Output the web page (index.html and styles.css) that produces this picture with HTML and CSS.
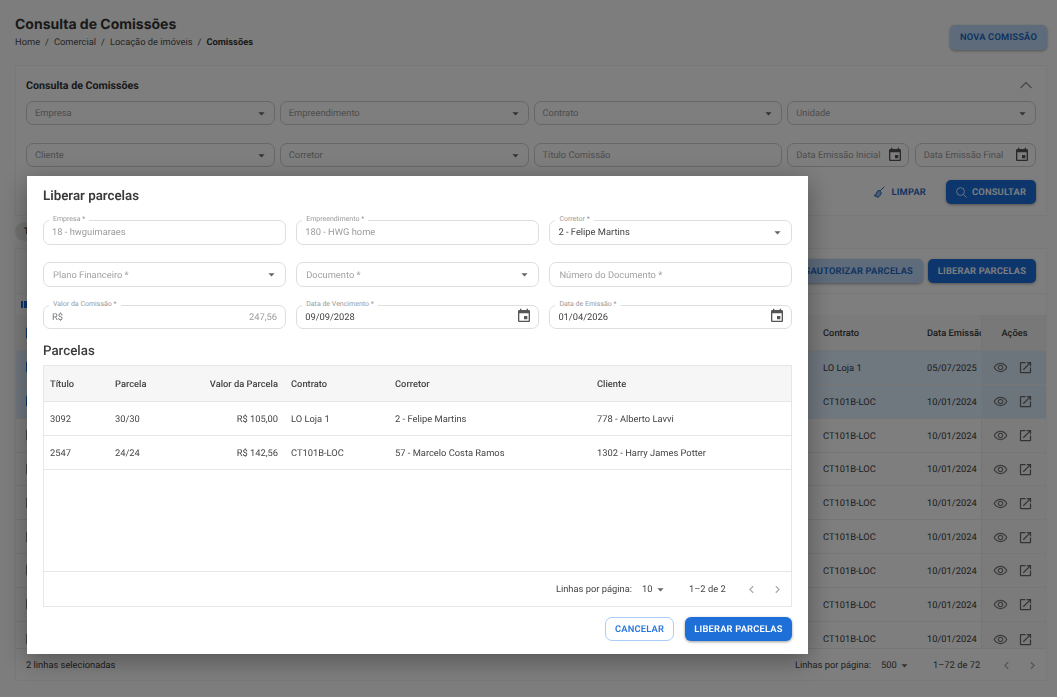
FILE: index.html
```html
<!DOCTYPE html>
<html lang="pt-BR">
<head>
<meta charset="utf-8">
<title>Consulta de Comissões</title>
<link rel="stylesheet" href="styles.css">
</head>
<body>
<svg class="defs" width="0" height="0" aria-hidden="true">
  <symbol id="i-drop" viewBox="0 0 24 24"><path d="M7 10l5 5 5-5z"/></symbol>
  <symbol id="i-cal" viewBox="0 0 24 24"><path d="M17 12h-5v5h5v-5zM16 1v2H8V1H6v2H5c-1.11 0-1.99.9-1.99 2L3 19c0 1.1.89 2 2 2h14c1.1 0 2-.9 2-2V5c0-1.1-.9-2-2-2h-1V1h-2zm3 18H5V8h14v11z"/></symbol>
  <symbol id="i-eye" viewBox="0 0 24 24"><path d="M12 6.500c3.790 0 7.170 2.130 8.820 5.500-1.650 3.370-5.020 5.500-8.820 5.500S4.830 15.370 3.180 12C4.830 8.630 8.210 6.500 12 6.500m0-2C7 4.500 2.730 7.610 1 12c1.730 4.390 6 7.500 11 7.500s9.270-3.110 11-7.500c-1.730-4.390-6-7.500-11-7.500zm0 5c1.380 0 2.500 1.120 2.500 2.500s-1.120 2.500-2.500 2.500-2.500-1.120-2.500-2.500 1.120-2.500 2.500-2.500m0-2c-2.480 0-4.500 2.020-4.500 4.500s2.020 4.500 4.500 4.500 4.500-2.020 4.500-4.500-2.020-4.500-4.500-4.500z"/></symbol>
  <symbol id="i-open" viewBox="0 0 24 24"><path d="M19 19H5V5h7V3H5c-1.110 0-2 .9-2 2v14c0 1.100.89 2 2 2h14c1.100 0 2-.9 2-2v-7h-2v7zM14 3v2h3.590l-9.830 9.830 1.410 1.410L19 6.410V10h2V3h-7z"/></symbol>
  <symbol id="i-left" viewBox="0 0 24 24"><path d="M15.410 7.410 14 6l-6 6 6 6 1.410-1.410L10.830 12z"/></symbol>
  <symbol id="i-right" viewBox="0 0 24 24"><path d="M10 6 8.590 7.410 13.170 12l-4.580 4.590L10 18l6-6z"/></symbol>
</svg>

<div class="page">
  <header class="head">
    <div>
      <h1 class="page-title">Consulta de Comissões</h1>
      <nav class="crumbs"><span>Home</span><i>/</i><span>Comercial</span><i>/</i><span>Locação de imóveis</span><i>/</i><b>Comissões</b></nav>
    </div>
    <button class="btn btn-light btn-new">NOVA COMISSÃO</button>
  </header>

  <section class="card filters">
    <div class="filters-top">
      <h2 class="card-title">Consulta de Comissões</h2>
      <svg class="collapse" viewBox="0 0 14 8"><path d="M1.500 7 7 1.500 12.500 7"/></svg>
    </div>
    <div class="filter-grid">
      <div class="bfield"><span>Empresa</span><svg class="ic-drop"><use href="#i-drop"/></svg></div>
      <div class="bfield"><span>Empreendimento</span><svg class="ic-drop"><use href="#i-drop"/></svg></div>
      <div class="bfield"><span>Contrato</span><svg class="ic-drop"><use href="#i-drop"/></svg></div>
      <div class="bfield"><span>Unidade</span><svg class="ic-drop"><use href="#i-drop"/></svg></div>
      <div class="bfield"><span>Cliente</span><svg class="ic-drop"><use href="#i-drop"/></svg></div>
      <div class="bfield"><span>Corretor</span><svg class="ic-drop"><use href="#i-drop"/></svg></div>
      <div class="bfield"><span>Título Comissão</span></div>
      <div class="date-pair">
        <div class="bfield"><span>Data Emissão Inicial</span><svg class="ic-cal"><use href="#i-cal"/></svg></div>
        <div class="bfield"><span>Data Emissão Final</span><svg class="ic-cal"><use href="#i-cal"/></svg></div>
      </div>
    </div>
    <div class="filter-actions">
      <button class="btn btn-text">
        <svg class="ic-broom" viewBox="0 0 16 16"><path d="M15 1 9.500 6.500"/><path class="broom-head" d="M8 5.500 11 8.800C10.500 11.300 9 13.500 7 15 5 14.700 3 13.700 1.500 12.500 3.500 12 5 10 5.200 7.800Z"/></svg>
        LIMPAR
      </button>
      <button class="btn btn-dark btn-search">
        <svg class="ic-search" viewBox="0 0 16 16"><circle cx="6.800" cy="6.800" r="4.800"/><path d="m10.300 10.300 4 4"/></svg>
        CONSULTAR
      </button>
    </div>
  </section>

  <div class="tabs"><span class="chip">T</span></div>

  <section class="card results">
    <div class="toolbar">
      <button class="btn btn-light">DESAUTORIZAR PARCELAS</button>
      <button class="btn btn-dark btn-release">LIBERAR PARCELAS</button>
    </div>
    <div class="tools"><span class="tool-bars"></span></div>
    <div class="rtable">
      <div class="rrow rhead"><span class="check check-on"></span><span>Contrato</span><span>Data Emissão</span><span class="ract">Ações</span></div>
      <div class="rrow sel"><span class="check check-on"></span><span>LO Loja 1</span><span>05/07/2025</span><span class="ract"><svg><use href="#i-eye"/></svg><svg><use href="#i-open"/></svg></span></div>
      <div class="rrow sel"><span class="check check-on"></span><span>CT101B-LOC</span><span>10/01/2024</span><span class="ract"><svg><use href="#i-eye"/></svg><svg><use href="#i-open"/></svg></span></div>
      <div class="rrow"><span class="check"></span><span>CT101B-LOC</span><span>10/01/2024</span><span class="ract"><svg><use href="#i-eye"/></svg><svg><use href="#i-open"/></svg></span></div>
      <div class="rrow"><span class="check"></span><span>CT101B-LOC</span><span>10/01/2024</span><span class="ract"><svg><use href="#i-eye"/></svg><svg><use href="#i-open"/></svg></span></div>
      <div class="rrow"><span class="check"></span><span>CT101B-LOC</span><span>10/01/2024</span><span class="ract"><svg><use href="#i-eye"/></svg><svg><use href="#i-open"/></svg></span></div>
      <div class="rrow"><span class="check"></span><span>CT101B-LOC</span><span>10/01/2024</span><span class="ract"><svg><use href="#i-eye"/></svg><svg><use href="#i-open"/></svg></span></div>
      <div class="rrow"><span class="check"></span><span>CT101B-LOC</span><span>10/01/2024</span><span class="ract"><svg><use href="#i-eye"/></svg><svg><use href="#i-open"/></svg></span></div>
      <div class="rrow"><span class="check"></span><span>CT101B-LOC</span><span>10/01/2024</span><span class="ract"><svg><use href="#i-eye"/></svg><svg><use href="#i-open"/></svg></span></div>
      <div class="rrow rlast"><span class="check"></span><span>CT101B-LOC</span><span>10/01/2024</span><span class="ract"><svg><use href="#i-eye"/></svg><svg><use href="#i-open"/></svg></span></div>
    </div>
    <footer class="rfoot">
      <span>2 linhas selecionadas</span>
      <div class="pager pager-page">
        <span>Linhas por página:</span>
        <span class="pager-size">500<svg class="ic-drop"><use href="#i-drop"/></svg></span>
        <span class="pager-range">1–72 de 72</span>
        <span class="pager-nav"><svg><use href="#i-left"/></svg><svg><use href="#i-right"/></svg></span>
      </div>
    </footer>
  </section>
</div>

<div class="overlay"></div>

<div class="modal" role="dialog">
  <h2 class="modal-title">Liberar parcelas</h2>
  <div class="form-grid">
    <div class="field"><label>Empresa *</label><span class="muted">18 - hwguimaraes</span></div>
    <div class="field"><label>Empreendimento *</label><span class="muted">180 - HWG home</span></div>
    <div class="field"><label>Corretor *</label><span>2 - Felipe Martins</span><svg class="ic-drop"><use href="#i-drop"/></svg></div>
    <div class="field"><span class="ph">Plano Financeiro *</span><svg class="ic-drop"><use href="#i-drop"/></svg></div>
    <div class="field"><span class="ph">Documento *</span><svg class="ic-drop"><use href="#i-drop"/></svg></div>
    <div class="field"><span class="ph">Número do Documento *</span></div>
    <div class="field"><label>Valor da Comissão *</label><span class="currency">R$</span><span class="muted amount">247,56</span></div>
    <div class="field"><label>Data de Vencimento *</label><span>09/09/2028</span><svg class="ic-cal"><use href="#i-cal"/></svg></div>
    <div class="field"><label>Data de Emissão *</label><span>01/04/2026</span><svg class="ic-cal"><use href="#i-cal"/></svg></div>
  </div>
  <h3 class="sub-title">Parcelas</h3>
  <div class="mtable">
    <div class="mrow mhead"><span>Título</span><span>Parcela</span><span class="num">Valor da Parcela</span><span>Contrato</span><span>Corretor</span><span>Cliente</span></div>
    <div class="mrow"><span>3092</span><span>30/30</span><span class="num">R$ 105,00</span><span>LO Loja 1</span><span>2 - Felipe Martins</span><span>778 - Alberto Lavvi</span></div>
    <div class="mrow"><span>2547</span><span>24/24</span><span class="num">R$ 142,56</span><span>CT101B-LOC</span><span>57 - Marcelo Costa Ramos</span><span>1302 - Harry James Potter</span></div>
    <div class="mempty"></div>
    <div class="mfoot">
      <div class="pager pager-modal">
        <span>Linhas por página:</span>
        <span class="pager-size">10<svg class="ic-drop"><use href="#i-drop"/></svg></span>
        <span class="pager-range">1–2 de 2</span>
        <span class="pager-nav"><svg><use href="#i-left"/></svg><svg><use href="#i-right"/></svg></span>
      </div>
    </div>
  </div>
  <div class="modal-actions">
    <button class="btn btn-outline">CANCELAR</button>
    <button class="btn btn-primary">LIBERAR PARCELAS</button>
  </div>
</div>
</body>
</html>
```

FILE: styles.css
```css
* { box-sizing: border-box; }
html, body { margin: 0; height: 100%; }
body {
  width: 1057px;
  height: 697px;
  overflow: hidden;
  font-family: Roboto, "Liberation Sans", sans-serif;
  font-size: 9.330px;
  text-rendering: geometricPrecision;
  color: #333;
  background: #fbfbfb;
}
.defs { display: block; height: 0; }
svg { fill: currentColor; display: block; }
h1, h2, h3 { margin: 0; }
button { font-family: inherit; cursor: pointer; text-rendering: geometricPrecision; }

.page { padding: 15px 10px 0 15px; height: 697px; overflow: hidden; }
.head { display: flex; justify-content: space-between; height: 50px; }
.page-title { font-family: Inter, sans-serif; font-size: 14px; font-weight: 700; line-height: 19px; color: #333; }
.crumbs { display: flex; gap: 5px; font-size: 9.330px; line-height: 12px; margin-top: 3px; color: #4a4a4a; }
.crumbs i { font-style: normal; }
.crumbs b { font-weight: 700; color: #333; }

.btn {
  border: 0;
  border-radius: 5px;
  height: 24px;
  padding: 0 10px;
  font-size: 9.330px;
  font-weight: 600;
  letter-spacing: .2px;
  white-space: nowrap;
}
.btn-light { background: #bcd6f5; color: #1764c0; box-shadow: 0 1px 3px rgba(0,0,0,.35); }
.btn-dark { background: #1a6ed8; color: #fff; box-shadow: 0 1px 3px rgba(0,0,0,.35); }
.btn-new { margin: 10px 0 0; width: 97px; height: 25px; padding: 0; }
.btn-release { width: 108px; padding: 0; flex: none; }
.btn-text { background: none; color: #1764c0; display: flex; align-items: center; gap: 6px; padding: 0; }
.btn-search { display: flex; align-items: center; gap: 4px; width: 90px; padding: 0 0 0 9px; }

.card { background: #fcfcfc; border: 1px solid #f0f0f0; }
.filters { height: 151px; padding: 0 10px; }
.filters-top { display: flex; justify-content: space-between; align-items: center; height: 35px; padding-top: 3px; }
.card-title { font-size: 10.670px; font-weight: 700; color: #333; }
.collapse { width: 14px; height: 8px; margin-right: 3px; fill: none; stroke: #8a8a8a; stroke-width: 1.100; }
.filter-grid { display: grid; grid-template-columns: repeat(4, 1fr); column-gap: 5px; row-gap: 18px; }
.date-pair { display: grid; grid-template-columns: 1fr 1fr; gap: 6px; }
.bfield {
  height: 24px;
  border: 1px solid #cfcfcf;
  border-radius: 7px;
  display: flex;
  align-items: center;
  justify-content: space-between;
  padding: 0 5px 0 8px;
  color: #9a9a9a;
  font-size: 9.330px;
  white-space: nowrap;
  min-width: 0;
}
.ic-drop { width: 15px; height: 15px; color: #666; flex: none; }
.ic-cal { width: 16px; height: 16px; color: #555; flex: none; }
.ic-broom { width: 12px; height: 12px; fill: none; stroke: currentColor; stroke-width: 1.300; }
.broom-head { fill: currentColor; fill-opacity: .45; }
.ic-search { width: 13px; height: 13px; fill: none; stroke: #d5e6fb; stroke-width: 1.200; }
.filter-actions { display: flex; justify-content: flex-end; align-items: center; gap: 20px; margin-top: 13px; }

.tabs { height: 32px; padding-top: 6px; }
.chip { display: block; width: 90px; height: 19px; line-height: 19px; border-radius: 10px; background: #e4e4e4; padding-left: 9px; font-size: 9.330px; font-weight: 700; }

.results { height: 433px; }
.toolbar { display: flex; justify-content: flex-end; gap: 5px; height: 45px; padding: 10px 10px 0 0; border-bottom: 1px solid #f0f0f0; }
.tools { height: 21px; padding: 7px 0 0 5px; }
.tool-bars { display: block; width: 6px; height: 7px; background: linear-gradient(90deg, #1a6ed8 0 33%, transparent 33% 50%, #1a6ed8 50% 100%); }
.rtable { height: 333px; overflow: hidden; }
.rrow {
  display: grid;
  grid-template-columns: 807px 104px 54px 66px;
  align-items: center;
  height: 33.850px;
  border-bottom: 1px solid #ececec;
  font-size: 9.330px;
  color: #3a3a3a;
  position: relative;
}
.rrow > span:nth-child(2) { grid-column: 2; padding-top: 2px; }
.rrow > span:nth-child(3) { white-space: nowrap; overflow: hidden; grid-column: 3; padding-top: 2px; }
.rrow .check { grid-column: 1; margin-left: 10px; width: 12px; height: 12px; background: #888; border-radius: 2px; }
.rrow .check-on { background: #1a6ed8; }
.rhead { height: 36px; background: #f6f6f6; font-weight: 500; }
.sel { background: #dfeefe; }
.rlast { border-bottom: 0; }
.ract { grid-column: 4; height: 100%; border-left: 1px solid #eaeaea; display: flex; align-items: center; justify-content: center; gap: 10px; padding: 1px 3px 0 0; background: rgba(0,0,0,.025); }
.rhead .ract { padding: 2px 0 0; }
.ract svg { width: 15px; height: 15px; color: #666; }
.ract svg:first-child { color: #7a7a7a; }
.rfoot { display: flex; justify-content: space-between; align-items: center; height: 32px; padding: 1px 6.500px 0 10px; border-top: 1px solid #ececec; font-size: 9.330px; color: #3a3a3a; }

.pager { display: flex; align-items: center; color: #444; font-size: 9.330px; }
.pager-size { display: flex; align-items: center; }
.pager-nav { display: flex; color: #aaa; gap: 11px; }
.pager-nav svg { width: 15px; height: 15px; }
.pager-page .pager-size { margin-left: 10px; width: 52px; }
.pager-page .pager-range { width: 65.500px; }
.pager-modal .pager-size { margin-left: 10px; width: 47px; }
.pager-modal .pager-range { width: 54.500px; }

.overlay { position: fixed; inset: 0; background: rgba(0,0,0,.5); }

.modal {
  position: fixed;
  left: 27px;
  top: 176px;
  width: 781px;
  height: 478px;
  background: #fff;
  padding: 13px 16px 0;
  box-shadow: 0 6px 24px rgba(0,0,0,.35);
}
.modal-title { font-size: 13.330px; font-weight: 600; line-height: 16px; color: #3a3a3a; }
.form-grid { display: grid; grid-template-columns: repeat(3, 243px); column-gap: 10.200px; row-gap: 17.750px; margin-top: 15px; }
.field {
  position: relative;
  height: 24.500px;
  border: 1.500px solid #dedede;
  border-radius: 7px;
  display: flex;
  align-items: center;
  justify-content: space-between;
  padding: 1px 6px 0 8px;
  font-size: 9.330px;
  color: #444;
}
.field .ic-cal { margin-top: -2px; }
.field .ic-drop { margin-top: -1px; }
.field label { position: absolute; left: 5px; top: -6px; padding: 0 4px; background: #fff; font-size: 7px; line-height: 9px; color: #9a9a9a; white-space: nowrap; }
.muted { color: #9b9b9b; }
.ph { color: #a3a3a3; margin-left: 1px; }
.currency { color: #777; }
.amount { margin-right: 2px; }
.sub-title { font-size: 13.330px; font-weight: 500; line-height: 16px; margin-top: 15px; color: #3a3a3a; }
.mtable { margin-top: 5px; height: 242px; border: 1px solid #e6e6e6; display: flex; flex-direction: column; }
.mrow {
  display: grid;
  grid-template-columns: 65px 65px 98px 117px 202px 1fr;
  align-items: center;
  height: 34px;
  padding: 1px 0 0 6px;
  border-bottom: 1px solid #e6e6e6;
  font-size: 9.330px;
  color: #444;
  flex: none;
}
.mrow .num { text-align: right; }
.mrow > span:nth-child(4) { padding-left: 13px; }
.mhead { height: 36px; background: #f6f6f6; font-weight: 500; }
.mempty { flex: 1; }
.mfoot { height: 35px; border-top: 1px solid #e6e6e6; display: flex; justify-content: flex-end; align-items: center; padding: 1px 6.500px 0 0; }
.modal-actions { display: flex; justify-content: flex-end; gap: 11px; margin-top: 10px; }
.btn-outline { width: 69px; padding: 0; background: #fff; border: 1px solid #a9cdf6; border-radius: 7px; color: #2a76dc; }
.btn-primary { width: 107px; padding: 0; background: #1f6fd8; color: #fff; border-radius: 6px; box-shadow: 0 1px 3px rgba(0,0,0,.4); }
```
